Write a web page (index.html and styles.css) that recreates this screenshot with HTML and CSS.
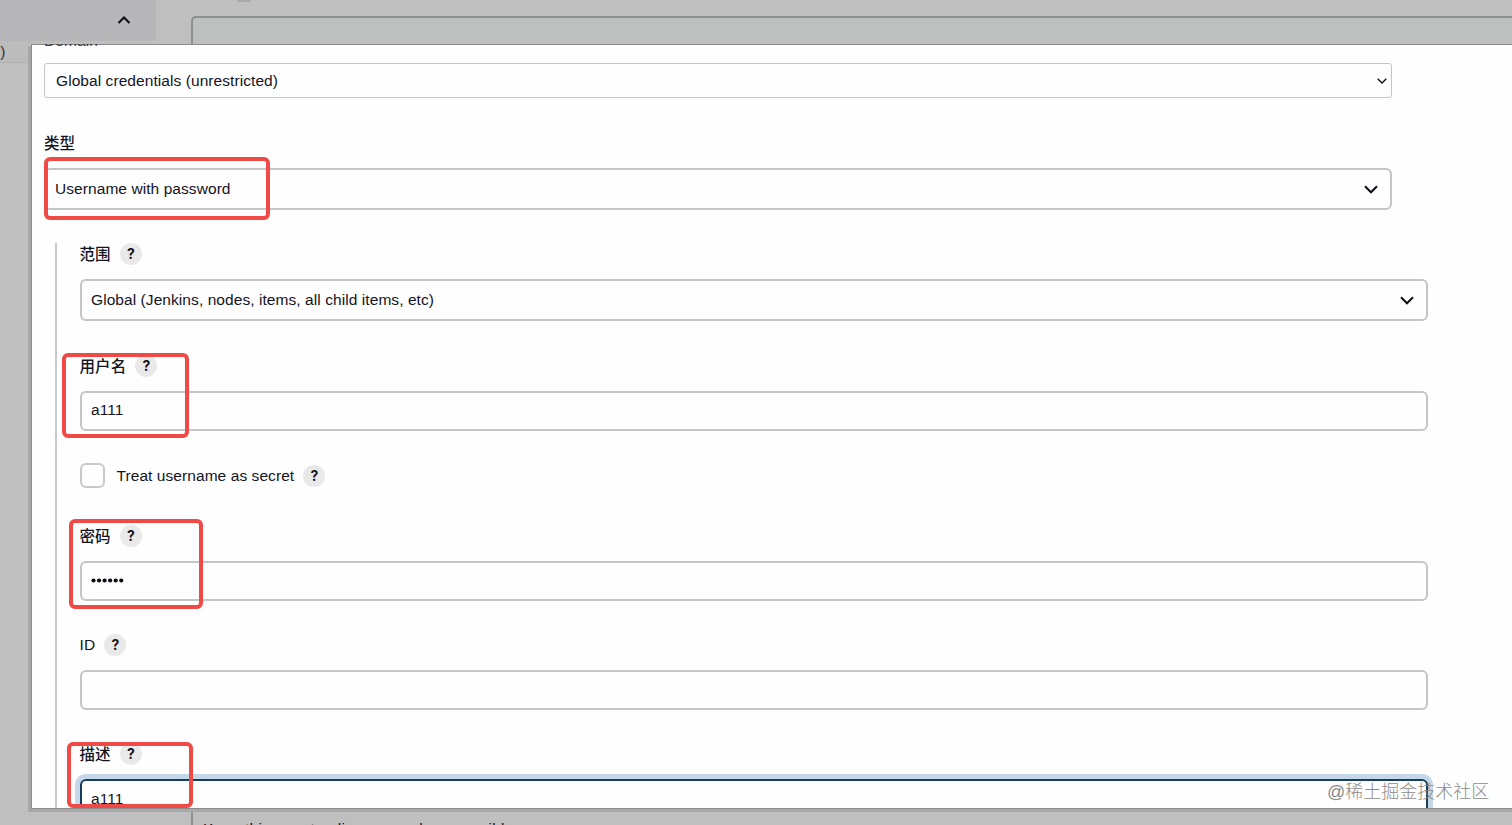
FILE: index.html
```html
<!DOCTYPE html>
<html lang="zh">
<head>
<meta charset="utf-8">
<title>Add Credentials</title>
<link rel="stylesheet" href="styles.css">
</head>
<body>
<div class="backdrop">
  <aside class="side">
    <div class="side-head"><svg class="caret" viewBox="0 0 14 8"><path d="M1.500 7 7 1.500 12.500 7"/></svg></div>
    <div class="side-row">r)</div>
  </aside>
  <div class="page">
    <i class="dot"></i>
    <div class="page-box"></div>
    <div class="page-box low">Keep this agent online as much as possible</div>
  </div>
</div>
<main class="dialog">
  <div class="field select thin"><span>Global credentials (unrestricted)</span><svg class="chev small" viewBox="0 0 10 6"><path d="M.7.700 5 5 9.300.7"/></svg></div>
  <div class="label kind"><span>类型</span></div>
  <div class="field select"><span>Username with password</span><svg class="chev" viewBox="0 0 14 9"><path d="M1 1.300 7 7.300 13 1.300"/></svg></div>
  <section class="group">
    <div class="label"><span>范围</span><b class="help">?</b></div>
    <div class="field select"><span>Global (Jenkins, nodes, items, all child items, etc)</span><svg class="chev" viewBox="0 0 14 9"><path d="M1 1.300 7 7.300 13 1.300"/></svg></div>
    <div class="label user"><span>用户名</span><b class="help">?</b></div>
    <div class="field">a111</div>
    <div class="check"><i class="box"></i>Treat username as secret<b class="help">?</b></div>
    <div class="label pass"><span>密码</span><b class="help">?</b></div>
    <div class="field"><svg class="dots" viewBox="0 0 33 5"><circle cx="2.500" cy="2.500" r="2.100"/><circle cx="8.050" cy="2.500" r="2.100"/><circle cx="13.600" cy="2.500" r="2.100"/><circle cx="19.150" cy="2.500" r="2.100"/><circle cx="24.700" cy="2.500" r="2.100"/><circle cx="30.250" cy="2.500" r="2.100"/></svg></div>
    <div class="label ident">ID<b class="help">?</b></div>
    <div class="field"></div>
    <div class="label desc"><span>描述</span><b class="help">?</b></div>
    <div class="field focus">a111</div>
  </section>
</main>
<div class="peek"><div>Domain</div></div>
<i class="mark mark-kind"></i>
<i class="mark mark-user"></i>
<i class="mark mark-pass"></i>
<i class="mark mark-desc"></i>
<div class="watermark">@稀土掘金技术社区</div>
</body>
</html>
```

FILE: styles.css
```css
* { box-sizing: border-box; }
body {
  margin: 0;
  width: 1512px;
  height: 825px;
  position: relative;
  overflow: hidden;
  background: #bfbfbf;
  color: #14141f;
  font: 15.500px/20px "Liberation Sans", "Noto Sans CJK SC", sans-serif;
  letter-spacing: .07px;
}
svg { fill: none; stroke: #0c0c14; stroke-width: 2; }
i { display: block; font-style: normal; }

.backdrop { display: flex; height: 825px; }
.side { width: 156px; flex: none; }
.side-head { height: 41px; background: #b7b7ba; padding: 16px 0 0 117px; }
.caret { display: block; width: 14px; height: 8px; }
.side-row { height: 22px; border-bottom: 1px solid #b0b0b0; background: #bcbcbc; margin-right: 124px; text-indent: -5px; line-height: 22px; color: #333; }
.page { flex: 1; padding-left: 35px; display: flex; flex-direction: column; }
.dot { flex: none; width: 14px; height: 2px; margin-left: 46px; background: #a9a9a9; border-radius: 0 0 7px 7px; }
.page-box { margin-top: 14px; height: 740px; flex: none; border: 2px solid #8e9090; border-right: 0; border-bottom: 0; border-radius: 5px 0 0 0; background: #bec0c0; }
.page-box.low { margin-top: 0; height: 69px; border-top: 0; border-radius: 0; background: #bfbfbf; padding: 63px 0 0 10px; white-space: nowrap; letter-spacing: .3px; }

.peek { position: absolute; left: 44px; top: 44px; height: 2px; width: 80px; overflow: hidden; opacity: .8; }
.peek div { margin-top: -13px; }

.dialog {
  position: absolute;
  left: 32px;
  top: 45px;
  width: 1480px;
  height: 763px;
  padding: 18px 120px 0 12px;
  background: #fefefe;
  box-shadow: 0 0 0 1px #8c8c8c, -4px 1px 0 #a7a7a7, 0 4px 0 #a7a7a7, -4px 4px 0 #a7a7a7;
  overflow: hidden;
}
.field {
  height: 40px;
  border: 2px solid #c3c5c7;
  border-radius: 6px;
  padding: 0 12px 2px 9px;
  display: flex;
  align-items: center;
  justify-content: space-between;
}
.field.select { height: 42px; padding-bottom: 0; }
.field.thin { height: 35px; border-width: 1px; border-radius: 3px; padding: 0 4px 0 11px; }
.chev { width: 14px; height: 9px; }
.chev.small { width: 10px; height: 6px; stroke-width: 1.300; }
.label { display: flex; align-items: center; height: 22px; font-weight: 500; margin-bottom: 14px; }
.label span { padding-top: 2px; }
.label.kind { margin-top: 34px; }
.group { width: 1373px; margin: 33px 0 0 11px; padding-left: 23px; border-left: 2px solid #c6c8ca; height: 620px; }
.group .label, .check { margin-left: -.5px; }
.help { width: 22px; height: 22px; margin-left: 9.200px; border-radius: 50%; background: #e9e9e9; text-align: center; font: bold 14px/22px Inter, sans-serif; }
.check { display: flex; align-items: center; height: 25px; margin-top: 32px; margin-bottom: 37px; }
.box { width: 25px; height: 25px; border: 2px solid #c6c8cb; border-radius: 6px; margin-right: 12px; }
.dots { width: 33px; height: 5px; fill: #0b0b14; stroke: none; }
.group .user { margin-top: 34px; }
.group .ident { margin-top: 33px; }
.group .desc { margin-top: 33px; }
.field.focus { border-color: #143d5e; box-shadow: 0 0 0 5px #c5d8ea; padding-bottom: 0; }

.mark { position: absolute; border: 4px solid #ef4a45; border-radius: 6px; }
.mark-kind { left: 44px; top: 157px; width: 226px; height: 63px; }
.mark-user { left: 62px; top: 353px; width: 127px; height: 85px; }
.mark-pass { left: 69px; top: 519px; width: 134px; height: 90px; }
.mark-desc { left: 67px; top: 742px; width: 126px; height: 66px; }
.watermark { position: absolute; left: 1327px; top: 782px; font-size: 18px; line-height: 20px; font-weight: 300; letter-spacing: 0; color: #8c8c8c; white-space: nowrap; }
```
